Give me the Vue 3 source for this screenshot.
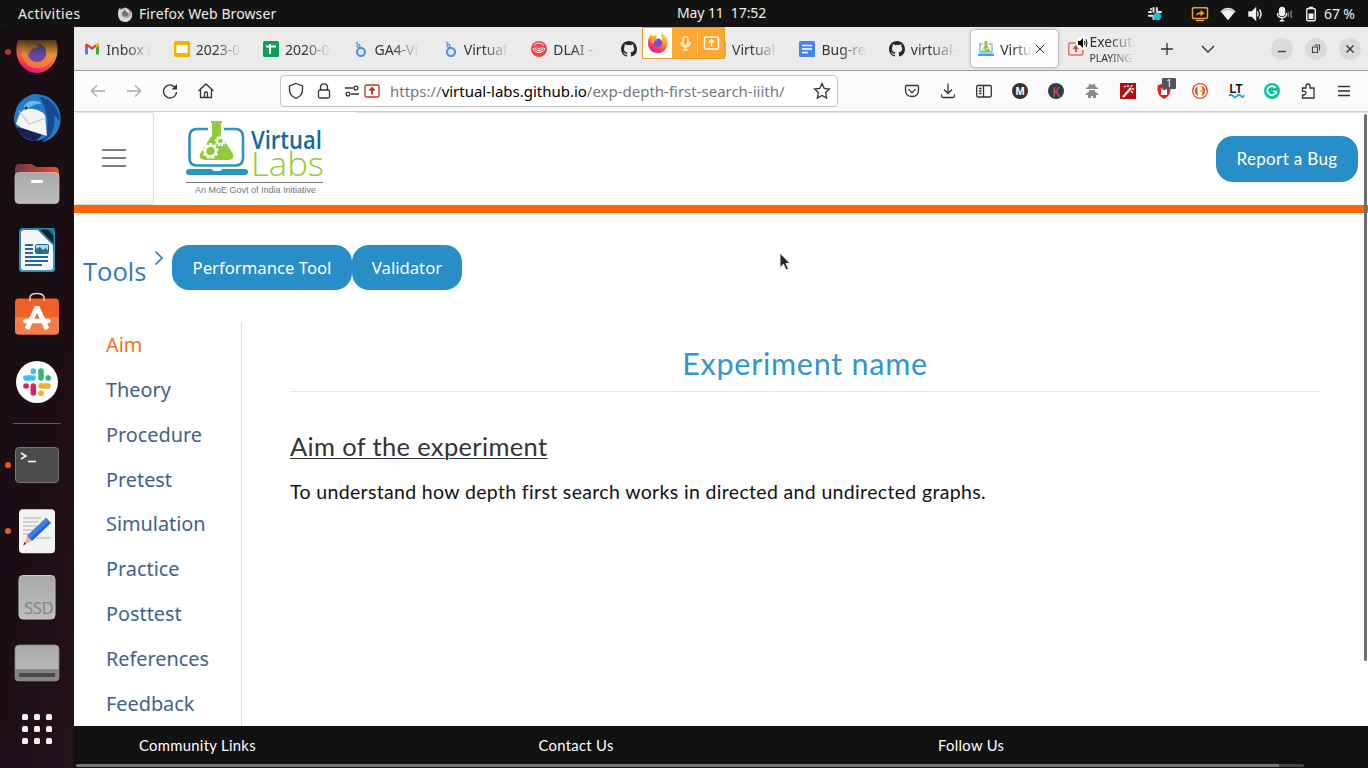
<script setup>
const tabs = [
  { icon: 'gmail', label: 'Inbox (5)' },
  { icon: 'slides', label: '2023-05' },
  { icon: 'sheets', label: '2020-05' },
  { icon: 'looker', label: 'GA4-Vir' },
  { icon: 'looker', label: 'Virtual L' },
  { icon: 'dlai', label: 'DLAI - Le' },
  { icon: 'github', label: 'virtual' },
  { icon: 'slides', label: 'Virtual L' },
  { icon: 'docs', label: 'Bug-rep' },
  { icon: 'github', label: 'virtual-l' },
  { icon: 'vlabs', label: 'Virtual', active: true },
  { icon: 'share', label: 'Executi', sub: 'PLAYING' },
]
const nav = ['Aim', 'Theory', 'Procedure', 'Pretest', 'Simulation', 'Practice', 'Posttest', 'References', 'Feedback']
const gridDots = [0, 1, 2, 3, 4, 5, 6, 7, 8]
const teeth = [0, 40, 80, 120, 160, 200, 240, 280, 320]
</script>

<template>
  <div class="screen">
    <header class="topbar">
      <span class="activities">Activities</span>
      <svg class="app-icon" width="16" height="16" viewBox="0 0 16 16">
        <circle cx="8" cy="8.5" r="6.8" fill="#a9a9a9" />
        <path d="M1 7C1 4 2 3 3 2L4 4C5 3 6 3 7 4L6 6L4 7C4 10 6 12 9 12C13 12 15 9 14 4C17 10 14 16 8 16C3 16 1 12 1 7Z" fill="#d8d8d8" />
        <circle cx="8.4" cy="7.6" r="3" fill="#737373" />
        <path d="M7 1C10 3 12 4 12 8L9 5Z" fill="#e5e5e5" />
      </svg>
      <span class="app-name">Firefox Web Browser</span>
      <span class="clock">May 11&nbsp; 17:52</span>
      <div class="tray">
        <svg width="18" height="18" viewBox="0 0 18 18">
          <g stroke="#e8e8e8" stroke-width="2" stroke-linecap="round">
            <path d="M7.500 3V7M3 7H5M10.800 3V6M3 10.700H7M7.500 11V14M11 7H15M5 4V4.200" />
          </g>
          <circle cx="11.300" cy="11.300" r="3.900" fill="#12bfdf" />
        </svg>
        <svg class="tray-share" width="18" height="16" viewBox="0 0 18 16" fill="none" stroke="#f7a02c" stroke-width="1.5">
          <rect x="1.500" y="1.800" width="15" height="10.700" rx="1.200" />
          <path d="M5 14.500H13" />
          <path d="M5 10C5 7.700 7 6.200 9.500 6.200V4L13.500 7.200L9.500 10.300V8.300C7.500 8.200 6 8.700 5 10Z" fill="#f7a02c" stroke="none" />
        </svg>
        <svg width="18" height="16" viewBox="0 0 18 16"><path d="M1.500 5.200Q9 -1.500 16.500 5.200L9 14.300Z" fill="#f2f2f2" /><path d="M2.700 5.900Q9 1 15.300 5.900" stroke="#a6a6a6" fill="none" /></svg>
        <svg width="18" height="16" viewBox="0 0 18 16" fill="none" stroke="#f2f2f2" stroke-width="1.400"><path d="M2 6H5L8.500 2.500V13.500L5 10H2Z" fill="#f2f2f2" /><path d="M10.500 5.500Q12 8 10.500 10.500M12.500 3.500Q15.500 8 12.500 12.500" /></svg>
        <svg width="18" height="16" viewBox="0 0 18 16" fill="none" stroke="#f2f2f2" stroke-width="1.400"><rect x="4.500" y="1.500" width="5" height="8" rx="2.500" fill="#f2f2f2" /><path d="M2.500 7V8Q2.800 11.500 7 11.800Q11.200 11.500 11.500 8V7M7 12V15M4.800 14.800H9.200" /><path d="M13.500 6Q12.700 8 13.500 11M16.500 4.500Q15 8 16.500 12" stroke="#858585" /></svg>
        <svg class="battery" width="12" height="16" viewBox="0 0 12 16"><rect x="1.700" y="2.500" width="8.600" height="12.200" rx="1.500" fill="none" stroke="#f2f2f2" stroke-width="1.400" /><path d="M4 .8H8V2H4ZM3.500 7.500H8.500V13H3.500Z" fill="#f2f2f2" /></svg>
        <span class="percent">67 %</span>
      </div>
    </header>

    <div class="desktop">
      <aside class="dock">
        <div class="slot first running dim">
          <svg viewBox="0 0 50 50">
            <defs>
              <linearGradient id="fx" x1="0.800" y1="0" x2="0.400" y2="1"><stop offset="0" stop-color="#b0942c" /><stop offset=".35" stop-color="#dc9a36" /><stop offset=".7" stop-color="#fa4d46" /><stop offset="1" stop-color="#e70a83" /></linearGradient>
              <linearGradient id="fade" x1="0" y1="0" x2="0" y2="1"><stop offset="0" stop-color="#1a0f16" stop-opacity=".75" /><stop offset="1" stop-color="#1a0f16" stop-opacity="0" /></linearGradient>
            </defs>
            <path d="M6 13H44C50 31 38 46 25 46C11 46 0 31 6 13Z" fill="url(#fx)" />
            <path d="M11 13L22 15L16 19L27 21L20 27L15 23C14 32 22 38 31 34C38 30 37 20 33 14H43C46 31 37 41 25 41C13 41 6 29 11 13Z" fill="#ed9132" opacity=".7" />
            <circle cx="25" cy="25.500" r="9.300" fill="#6547a5" />
            <path d="M12 13H28L24 17L27 20L20 22L16 28Z" fill="#bd8b31" />
            <rect x="3" y="12" width="44" height="16" fill="url(#fade)" />
          </svg>
        </div>
        <div class="slot">
          <svg viewBox="0 0 50 50">
            <path d="M3 20C5 8 15 3 21 1C30 1 37 3 42 9C50 17 50 29 46 37C43 43 37 48 30 49L33 45C22 51 11 47 6 37C2 31 1 25 3 20Z" fill="#247bc5" />
            <path d="M27 4C38 4 48 16 48 28L42 22C44 35 39 45 30 49C38 38 38 20 27 4Z" fill="#174b8d" />
            <path d="M7 22L11 17C19 14 29 17 33 22L35 43L10 35L4 31Z" fill="#f5f4f5" />
            <path d="M7 18L17 31L34 25" fill="none" stroke="#c5c6cc" stroke-width="1.200" />
            <path d="M4 34L12 36L30 42L24 48C14 47 7 41 4 34Z" fill="#192250" />
            <path d="M12 13C17 6 26 7 30 11C23 10 20 14 12 17Z" fill="#64bdeb" />
            <circle cx="14" cy="15" r="1.500" fill="#253044" />
          </svg>
        </div>
        <div class="slot">
          <svg viewBox="0 0 50 50">
            <defs><linearGradient id="fold" x1="0"><stop offset="0" stop-color="#743347" /><stop offset="1" stop-color="#e2512b" /></linearGradient><linearGradient id="silver" x1="0" y1="0" x2="0" y2="1"><stop offset="0" stop-color="#a9a9a9" /><stop offset="1" stop-color="#bdbdbd" /></linearGradient></defs>
            <path d="M3 10Q3 5 7 5H20L24 8H43Q47 8 47 13V35H3Z" fill="url(#fold)" />
            <rect x="3" y="13.500" width="44" height="31" rx="4" fill="url(#silver)" stroke="#c9c9c9" stroke-width=".7" />
            <rect x="19" y="21" width="12" height="3" rx="1" fill="#fff" />
          </svg>
        </div>
        <div class="slot">
          <svg viewBox="0 0 50 50">
            <rect x="7" y="3" width="36" height="44" rx="4" fill="#2b789d" />
            <path d="M7 25H43V43Q43 47 39 47H11Q7 47 7 43Z" fill="#57abd3" />
            <path d="M12 5H26L41 20V42Q41 45 38 45H12Q9 45 9 42V8Q9 5 12 5Z" fill="#f4f6f7" />
            <path d="M26 3L43 20V3Z" fill="#14222e" /><path d="M34 3H41Q43 3 43 5V12Z" fill="#236c92" />
            <path d="M25 3L43 21" stroke="#2b789d" stroke-width="1.500" />
            <path d="M13 20H21M13 24H21M13 28H21M13 32H36M13 36H36M13 40H30" stroke="#236c94" stroke-width="2" />
            <rect x="23.500" y="19.500" width="13" height="9" rx="1" fill="#a8d7ec" stroke="#24698b" /><path d="M24 28V24L28 22L31 25L34 23L36 26V28Z" fill="#246b90" />
            <rect x="7.700" y="3.700" width="34.600" height="42.600" rx="4" fill="none" stroke="#3489b4" stroke-width="1.400" />
          </svg>
        </div>
        <div class="slot">
          <svg viewBox="0 0 50 50">
            <rect x="3" y="7.500" width="44" height="36" rx="4" fill="#ef6128" /><path d="M3 26H47V40Q47 43.500 43 43.500H7Q3 43.500 3 40Z" fill="#f17d4b" />
            <path d="M18 10V7Q18 2.500 25 2.500Q32 2.500 32 7V10" fill="none" stroke="#e8c99a" stroke-width="1.700" />
            <path d="M15 38L25 16L35 38" fill="none" stroke="#fff" stroke-width="5" stroke-linejoin="bevel" /><path d="M13.500 30H36.500" stroke="#fff" stroke-width="4.600" stroke-linecap="round" />
          </svg>
        </div>
        <div class="slot">
          <svg viewBox="0 0 50 50">
            <circle cx="25" cy="25" r="21" fill="#fff" />
            <g stroke-linecap="round" stroke-width="5.500">
              <path d="M14 21H21" stroke="#36c5f0" /><path d="M21.300 14V14.500" stroke="#36c5f0" />
              <path d="M29 14V21" stroke="#2eb67d" /><path d="M36 21H36.200" stroke="#2eb67d" />
              <path d="M29 29H36" stroke="#ecb22e" /><path d="M29 36V36.200" stroke="#ecb22e" />
              <path d="M21.300 29V36" stroke="#e01e5a" /><path d="M14 29H14.200" stroke="#e01e5a" />
            </g>
          </svg>
        </div>
        <div class="separator"></div>
        <div class="slot running">
          <svg viewBox="0 0 50 50"><rect x="3.500" y="7.500" width="43" height="35" rx="3.500" fill="#4b4b4b" stroke="#777" /><path d="M9 13L14 16L9 19M16 21.500H24" fill="none" stroke="#fff" stroke-width="1.500" /></svg>
        </div>
        <div class="slot running">
          <svg viewBox="0 0 50 50"><rect x="7" y="3.300" width="36" height="44" rx="4" fill="#f3f3f2" /><path d="M11 12H29M11 16H26M11 20H25M11 24H22M11 28H20M24 32H39" stroke="#c5c2b8" stroke-width="1.700" /><path d="M34 12L39 17L20 35L15 30Z" fill="#2862cf" /><path d="M34 12L37 15L18 33L15 30Z" fill="#3f7eed" /><path d="M15 30L20 35L11.500 39Z" fill="#eab88b" /><path d="M12.500 36L14 38L11.200 39.500Z" fill="#333" /></svg>
        </div>
        <div class="slot">
          <svg viewBox="0 0 50 50"><rect x="7" y="3.500" width="36" height="43.500" rx="4" fill="url(#silver)" stroke="#cacaca" /><text x="12" y="42" class="ssd" textLength="30">SSD</text></svg>
        </div>
        <div class="slot">
          <svg viewBox="0 0 50 50"><rect x="3" y="7" width="44" height="36" rx="4" fill="url(#silver)" stroke="#898989" stroke-width=".7" /><path d="M3 31H47V39Q47 43 43 43H7Q3 43 3 39Z" fill="#858585" /><rect x="7" y="35" width="36" height="4" fill="#4a4a4a" /></svg>
        </div>
        <div class="slot">
          <div class="apps"><i v-for="d in gridDots" :key="d"></i></div>
        </div>
      </aside>

      <main class="window">
        <div class="tabbar">
          <div v-for="(tab, i) in tabs" :key="i" class="tab" :class="{ active: tab.active }">
            <svg class="favicon" width="16" height="16" viewBox="0 0 16 16">
              <g v-if="tab.icon === 'gmail'"><path d="M1 4V13H4V6L8 9L12 6V13H15V4Q14 1.500 12 3L8 6L4 3Q2 1.500 1 4Z" fill="#e94335" /><path d="M1 5L4 7V13.500H2Q1 13.500 1 12Z" fill="#4285f4" /><path d="M12 7L15 5V12Q15 13.500 14 13.500H12Z" fill="#34a853" /><path d="M12 3Q15 2 15 5L12 7Z" fill="#fbbc04" /></g>
              <g v-else-if="tab.icon === 'slides'"><rect width="16" height="16" rx="1.500" fill="#f4b400" /><rect x="2.500" y="4" width="11" height="8" fill="#fff" /></g>
              <g v-else-if="tab.icon === 'sheets'"><rect width="16" height="16" rx="1.500" fill="#0f9d58" /><path d="M3 5.500H13M7 3V13" stroke="#fff" stroke-width="2" /></g>
              <g v-else-if="tab.icon === 'looker'" fill="none" stroke="#4c8df2"><circle cx="9" cy="11" r="4" stroke-width="2.200" /><circle cx="6.500" cy="4.800" r="1.500" stroke-width="1.200" /><circle cx="5" cy="1.800" r=".7" /></g>
              <g v-else-if="tab.icon === 'dlai'" fill="none" stroke="#fff"><circle cx="8" cy="8" r="8" fill="#e8484d" stroke="none" /><path d="M2 7C3 13 13 13 14 7M4 6.500C5 11 11 11 12 6.500M6 6.500Q8 10 10 6.500" stroke-width="1" /><path d="M3 4.500Q8 -.5 13 4.500" stroke-width=".8" /></g>
              <path v-else-if="tab.icon === 'github'" fill="#24292e" fill-rule="evenodd" d="M8 0C3.580 0 0 3.580 0 8c0 3.540 2.290 6.530 5.470 7.590.4.070.55-.17.55-.38v-1.340C3.800 14.350 3.330 12.800 3.330 12.800c-.36-.92-.89-1.170-.89-1.170-.73-.5.05-.49.050-.49.8.06 1.230.82 1.230.82.71 1.220 1.870.87 2.330.66.070-.52.28-.87.51-1.070-1.780-.2-3.640-.89-3.640-3.950 0-.87.31-1.590.82-2.150-.08-.2-.36-1.020.08-2.120 0 0 .67-.21 2.200.82.64-.18 1.320-.27 2-.27s1.360.09 2 .27c1.530-1.040 2.200-.82 2.200-.82.44 1.100.16 1.920.08 2.120.51.56.82 1.270.82 2.150 0 3.070-1.870 3.750-3.650 3.950.29.25.54.73.54 1.480v2.190c0 .21.15.46.55.38A8.010 8.010 0 0 0 16 8c0-4.420-3.580-8-8-8Z" />
              <g v-else-if="tab.icon === 'docs'"><rect width="16" height="16" rx="1.500" fill="#4285f4" /><path d="M3 4.500H13M3 8H13M3 11.500H9" stroke="#fff" stroke-width="1.600" /></g>
              <g v-else-if="tab.icon === 'vlabs'"><path d="M5 3H2V12H14V3H11" fill="none" stroke="#7dbce0" stroke-width="1.400" /><path d="M0 14H16" stroke="#48a0d1" stroke-width="2" /><path d="M6.500 0H9.500V5L13 11H3L6.500 5Z" fill="#93c83d" /><circle cx="6" cy="9" r="1" fill="#fff" /><circle cx="9" cy="7.500" r=".8" fill="#fff" /></g>
              <g v-else><rect x=".8" y="2" width="14" height="12" rx="1.500" fill="none" stroke="#e36c61" stroke-width="1.500" /><path d="M8 11V5M5.500 8L8 5L10.500 8" stroke="#d74437" stroke-width="1.800" fill="none" /></g>
            </svg>
            <span v-if="tab.sub" class="sound"><svg width="10" height="10" viewBox="0 0 10 10"><path d="M0 3H2L5 0V10L2 7H0Z" fill="#000" /><path d="M6.500 3Q7.500 5 6.500 7M8 1Q10 5 8 9" fill="none" stroke="#000" /></svg></span>
            <span class="tab-text" :class="{ double: tab.sub }">
              <span>{{ tab.label }}</span><small v-if="tab.sub">{{ tab.sub }}</small>
            </span>
            <svg v-if="tab.active" class="close" width="10" height="10" viewBox="0 0 10 10"><path d="M1 1L9 9M9 1L1 9" stroke="#333" stroke-width="1" /></svg>
          </div>
          <div class="tab-tools">
            <svg width="12" height="12" viewBox="0 0 12 12"><path d="M6 0V12M0 6H12" stroke="#333" stroke-width="1.300" /></svg>
            <svg width="14" height="8" viewBox="0 0 14 8"><path d="M1 1L7 7L13 1" stroke="#333" stroke-width="1.400" fill="none" /></svg>
          </div>
          <div class="controls">
            <span><svg width="10" height="10" viewBox="0 0 10 10"><path d="M1 7.500H9" stroke="#333" stroke-width="1.300" /></svg></span>
            <span><svg width="10" height="10" viewBox="0 0 10 10"><path d="M1.500 3H6.500V8.500H1.500ZM3.500 1H8.500V6.500" fill="none" stroke="#444" stroke-width="1.100" /></svg></span>
            <span><svg width="10" height="10" viewBox="0 0 10 10"><path d="M1.500 1.500L8.500 8.500M8.500 1.500L1.500 8.500" stroke="#333" stroke-width="1.400" /></svg></span>
          </div>
          <div class="sharing">
            <span class="sharing-fox"><svg width="22" height="22" viewBox="0 0 22 22"><defs><linearGradient id="fx2" x1=".8" y1="0" x2=".3" y2="1"><stop offset="0" stop-color="#ffe743" /><stop offset=".4" stop-color="#ff9b2e" /><stop offset=".75" stop-color="#f83c55" /><stop offset="1" stop-color="#d41d9a" /></linearGradient></defs><path d="M1 11C1 7 2 5 4 2L5 5L9 3L8 6L11 8L6 9C7 15 14 15 15 10C16 6 13 4 14 0C17 2 17 4 19 5C22 10 21 21 11 21C5 21 1 17 1 11Z" fill="url(#fx2)" /><circle cx="11" cy="10.800" r="4.300" fill="#7050d6" /><path d="M3 4L10 4L8 7L11 8L7 9L5 12Z" fill="#ffa62d" /></svg></span>
            <svg width="24" height="22" viewBox="0 0 24 22" fill="none" stroke="#fff" stroke-width="1.200"><rect x="10" y="4.500" width="5" height="9" rx="2.500" /><path d="M8 10V11Q8.500 15 12.500 15Q16.500 15 17 11V10M12.500 15V18M9.500 18H15.500" /></svg>
            <span class="sharing-screen"><svg width="18" height="18" viewBox="0 0 18 18" fill="none" stroke="#fff" stroke-width="1.400"><rect x="1.500" y="3" width="14" height="12" rx="1.500" /><path d="M8.500 12.500V6M6 8.500L8.500 6L11 8.500" /></svg></span>
          </div>
        </div>

        <div class="toolbar">
          <div class="navs">
            <svg class="muted" viewBox="0 0 18 18"><path d="M16 9H2M8 3.500L2.300 9L8 14.500" /></svg>
            <svg class="muted" viewBox="0 0 18 18"><path d="M2 9H16M10 3.500L15.700 9L10 14.500" /></svg>
            <svg viewBox="0 0 18 18"><path d="M14.800 6.500A6.500 6.500 0 1 0 15.500 10" /><path d="M16 2V7.500H10.500Z" fill="#333" stroke="none" /></svg>
            <svg viewBox="0 0 18 18"><path d="M1.500 9L9 2L16.500 9M3.500 7.500V15.500H14.500V7.500M7.500 15V11.500Q7.500 10 9 10Q10.500 10 10.500 11.500V15" /></svg>
          </div>
          <div class="urlbar">
            <svg class="u1" viewBox="0 0 18 18"><path d="M9 1.500L15.500 4V8Q15.500 13.500 9 16.500Q2.500 13.500 2.500 8V4Z" /></svg>
            <svg class="u2" viewBox="0 0 18 18"><rect x="3.500" y="8" width="11" height="8" rx="1.500" /><path d="M5.500 8V5Q5.500 1.800 9 1.800Q12.500 1.800 12.500 5V8" /></svg>
            <svg class="u3" viewBox="0 0 18 18"><path d="M2 6H10M8 12H16" /><circle cx="13" cy="6" r="1.900" /><circle cx="5" cy="12" r="1.900" /></svg>
            <svg class="u4 red" viewBox="0 0 18 18"><rect x="2" y="3" width="14" height="12" rx="1.500" /><path d="M9 12.500V6M6.500 8.500L9 6L11.500 8.500" stroke-width="1.800" /></svg>
            <span class="url">https://<b>virtual-labs.github.io</b>/exp-depth-first-search-iiith/</span>
            <svg class="star" viewBox="0 0 18 18"><path d="M9 1.500L11.200 6.300L16.500 7L12.600 10.600L13.600 16L9 13.400L4.400 16L5.400 10.600L1.500 7L6.800 6.300Z" /></svg>
          </div>
          <div class="exts">
            <svg viewBox="0 0 18 18"><path d="M3.500 3.500H14.500Q15.500 3.500 15.500 4.500V8Q15.500 14.500 9 14.500Q2.500 14.500 2.500 8V4.500Q2.500 3.500 3.500 3.500ZM5.500 7.300L9 10.600L12.500 7.300" /></svg>
            <svg viewBox="0 0 18 18"><path d="M9 1.500V11M5 7.500L9 11.500L13 7.500M2.500 12.500V14Q2.500 15.500 4 15.500H14Q15.500 15.500 15.500 14V12.500" /></svg>
            <svg viewBox="0 0 18 18"><rect x="1.700" y="3.500" width="14.600" height="11.500" rx="1.500" /><path d="M8.500 3.500V15M4 6.500H6.500M4 9H6.500M4 11.500H6.500" /></svg>
            <svg viewBox="0 0 18 18"><circle cx="9" cy="9" r="8" fill="#343434" stroke="none" /><text x="9" y="13" text-anchor="middle" class="m">M</text></svg>
            <svg viewBox="0 0 18 18"><circle cx="9" cy="9" r="8" fill="#293f50" stroke="none" /><text x="5.500" y="14.500" textLength="7.500" lengthAdjust="spacingAndGlyphs" class="k">K</text></svg>
            <svg viewBox="0 0 18 18"><g fill="#8c8c8c" stroke="none"><path d="M5 5L6.500 1.500L9 3L11.500 1.500L13 5L15 6V7H3V6Z" /><path d="M6 8H12V10L15 11.500V13H13V16H10V14H8V16H5V13H3V11.500L6 10Z" /></g></svg>
            <svg viewBox="0 0 18 18"><rect x="1" y="1" width="16" height="16" fill="#b60e14" stroke="none" /><path d="M4 15L12 6" stroke="#fff" stroke-width="2.200" /><path d="M5 5L7 4M9 3V5M13 3L12 5M15 7H13M14 11L12 9" stroke="#fff" /></svg>
            <span class="ublock"><svg viewBox="0 0 18 18"><path d="M9 1L15.500 3.500V8Q15 14 9 17Q3 14 2.500 8V3.500Z" fill="#e01e24" stroke="none" /><rect x="6" y="8" width="6" height="5" fill="#fff" stroke="none" /><path d="M7 8V6.500Q9 4 11 6.500V8" stroke="#fff" /></svg><em>1</em></span>
            <svg viewBox="0 0 18 18"><circle cx="9" cy="9" r="8" fill="#e35335" stroke="none" /><circle cx="9" cy="9" r="6" fill="#e35335" stroke="#fff" /><path d="M7 15L6.500 7Q6 3.500 9 4Q12 4.500 11 9L11.500 15Z" fill="#fff" stroke="none" /><path d="M9 8Q12 7.500 13.500 9L9.500 10.500Z" fill="#fac43c" stroke="none" /><path d="M10 12H13L12 14Z" fill="#58ad51" stroke="none" /></svg>
            <svg viewBox="0 0 18 18"><text x="2.500" y="11" textLength="13" lengthAdjust="spacingAndGlyphs" class="lt">LT</text><path d="M2 14Q4 11.500 6 14T10 14T14 14T17 13" stroke="#229ad6" stroke-width="1.800" /></svg>
            <svg viewBox="0 0 18 18"><circle cx="9" cy="9" r="8" fill="#15c39a" stroke="none" /><path d="M12.500 6A4.500 4.500 0 1 0 13.300 9.500H10M13.300 9.500V12" stroke="#fff" stroke-width="1.500" /></svg>
            <svg viewBox="0 0 18 18"><path d="M3.500 6H7V4Q7 2 9 2Q11 2 11 4V6H15V16H3.500V13H5Q7 12.500 7 10.800Q7 9.300 5 9.300H3.500Z" /></svg>
            <svg viewBox="0 0 18 18"><path d="M3 4.500H15M3 9H15M3 13.500H15" /></svg>
          </div>
        </div>

        <section class="page">
          <header class="site-header">
            <button class="burger"><i></i><i></i><i></i></button>
            <svg class="logo" width="138" height="78" viewBox="0 0 138 78">
              <path d="M22 9H11Q3.500 9 3.500 17V38Q3.500 45.500 11 45.500H49Q57 45.500 57 38V17Q57 9 49 9H38" fill="none" stroke="#2c92c8" stroke-width="2.600" />
              <path d="M3 49H26Q26 51 28 51H34Q36 51 36 49H59Q62 49 62 52Q62 55 59 55H3Q0 55 0 52Q0 49 3 49Z" fill="#2c92c8" />
              <path d="M25 1H36V3H35V15L47 34Q49 39 43 40H19Q12 39 14 34L26 15V3H25Z" fill="#94c83d" />
              <g fill="#fff"><path v-for="a in teeth" :key="a" d="M23 23H26V27H23Z" :transform="`rotate(${a} 24.5 31)`" /><circle cx="24.500" cy="31" r="6.500" /><path v-for="a in teeth" :key="a + 500" d="M33.500 15.500H35.500V19H33.500Z" :transform="`rotate(${a} 34.5 21)`" /><circle cx="34.500" cy="21" r="4" /></g>
              <circle cx="24.500" cy="31" r="4.300" fill="#94c83d" /><circle cx="34.500" cy="21" r="2.300" fill="#94c83d" />
              <text x="65" y="28.500" class="logo-virtual" textLength="71" lengthAdjust="spacingAndGlyphs">Virtual</text>
              <text x="65" y="55.500" class="logo-labs" textLength="73" lengthAdjust="spacingAndGlyphs">Labs</text>
              <path d="M0 62.500H137" stroke="#777" />
              <text x="9" y="73" class="logo-tag" textLength="121" lengthAdjust="spacingAndGlyphs">An MoE Govt of India Initiative</text>
            </svg>
            <button class="pill report">Report a Bug</button>
          </header>
          <div class="tools">
            <span class="tools-title">Tools</span>
            <svg class="tools-chevron" width="10" height="16" viewBox="0 0 10 16"><path d="M1.500 1.500L8 8L1.500 14.500" fill="none" stroke="#337ab7" stroke-width="1.700" /></svg>
            <button class="pill perf">Performance Tool</button>
            <button class="pill valid">Validator</button>
          </div>
          <div class="columns">
            <nav class="side"><a v-for="n in nav" :key="n" :class="{ on: n === 'Aim' }">{{ n }}</a></nav>
            <article>
              <h1>Experiment name</h1>
              <h2>Aim of the experiment</h2>
              <p>To understand how depth first search works in directed and undirected graphs.</p>
            </article>
          </div>
          <footer><span>Community Links</span><span>Contact Us</span><span>Follow Us</span></footer>
          <div class="vscroll"></div>
          <div class="hscroll"></div>
        </section>
      </main>
    </div>
    <svg class="pointer" width="14" height="20" viewBox="0 0 14 20"><path d="M2 1V15.500L5.500 12.300L8 18L10.500 17L8 11.500H12Z" fill="#292929" stroke="#eee" stroke-width="1" /></svg>
  </div>
</template>

<style>
body { overflow: hidden; }
</style>

<style scoped>
* { box-sizing: border-box; }
.screen { width: 1368px; height: 768px; position: relative; overflow: hidden; font-family: "Noto Sans", "Open Sans", sans-serif; background: #fff; }
svg { display: block; flex: none; }
button { border: 0; padding: 0; font: inherit; }
.topbar { height: 27px; background: #131313; color: #eee; display: flex; align-items: center; position: relative; font-size: 14px; padding: 0 12px 0 18px; white-space: nowrap; }
.activities { width: 99px; letter-spacing: .42px; }
.app-name { margin-left: 6px; letter-spacing: .1px; }
.clock { position: absolute; left: 677px; top: 0; line-height: 26px; letter-spacing: -.1px; }
.tray { margin-left: auto; display: flex; align-items: center; gap: 10px; }
.tray-share { margin-left: 17px; }
.battery { margin-left: 2px; }
.percent { width: 32px; margin-left: -3px; letter-spacing: -.1px; }
.desktop { display: flex; height: 741px; }
.dock { width: 74px; flex: none; overflow: hidden; background: linear-gradient(100deg, #160d12, #1d0e16 60%, #26121c); }
.slot { height: 66px; display: flex; align-items: center; justify-content: center; position: relative; }
.slot svg { width: 50px; height: 50px; }
.first { margin-top: -8px; }
.running::before { content: ""; position: absolute; left: 5px; top: 30px; width: 6px; height: 6px; border-radius: 50%; background: #e95420; }
.dim::before { opacity: .7; }
.separator { height: 17px; padding-top: 8px; }
.separator::before { content: ""; display: block; width: 48px; height: 1px; background: #5e575c; margin-left: 13px; }
.ssd { font: 17px "Noto Sans", sans-serif; fill: #858585; }
.apps { display: grid; grid-template-columns: repeat(3, 6px); gap: 6px; }
.apps i { height: 6px; border-radius: 1.5px; background: #f2f2f2; }
.window { width: 1294px; }
.tabbar { height: 44px; background: #ebebeb; border-bottom: 1px solid #999; display: flex; align-items: center; padding-left: 2px; position: relative; }
.tab { width: 87.400px; height: 37px; margin: 0 1px; padding-left: 7.300px; display: flex; align-items: center; position: relative; flex: none; }
.tab.active { background: #fcfcfc; border-radius: 4px; box-shadow: 0 0 3px rgba(0,0,0,.5); }
.tab-text { margin-left: 6px; width: 47px; overflow: hidden; white-space: nowrap; font-size: 14px; line-height: 20px; padding-top: 2px; color: #333; mask-image: linear-gradient(90deg, #000 40%, transparent 98%); }
.active .tab-text { width: 34px; }
.close { margin-left: 1px; }
.double { font-size: 13.800px; line-height: 16px; display: flex; flex-direction: column; padding-top: 1px; }
.double small { font-size: 10.500px; line-height: 14px; letter-spacing: -.1px; padding-top: 1px; }
.sound { position: absolute; left: 16px; top: 6px; width: 14px; height: 14px; border-radius: 50%; background: #fff; padding: 2px; }
.tab-tools { margin-left: 12px; display: flex; align-items: center; gap: 28px; }
.controls { margin-left: auto; margin-right: 7px; display: flex; gap: 12px; }
.controls span { width: 22px; height: 22px; border-radius: 50%; background: #dadada; display: grid; place-items: center; }
.sharing { position: absolute; left: 568px; top: 0; width: 83px; height: 32px; border: 1px solid #e89c29; background: #fca833; display: flex; align-items: center; }
.sharing-fox { width: 29px; height: 30px; background: #fff; display: grid; place-items: center; }
.sharing > svg { margin-left: 1px; }
.sharing-screen { border-left: 1px solid #fdd090; padding: 2px 0 2px 5px; }
.toolbar { height: 41px; background: #fbfbfb; border-bottom: 1px solid #ccc; display: flex; align-items: center; }
.toolbar svg { width: 18px; height: 18px; fill: none; stroke: #333; stroke-width: 1.300; }
.navs { display: flex; gap: 18px; margin-left: 15px; width: 191px; }
.navs .muted { stroke: #aaa; }
.urlbar { width: 558px; height: 32px; border: 1px solid #c4c4c4; border-radius: 4px; background: #fff; display: flex; align-items: center; padding: 0 6px; }
.u2 { margin-left: 10px; }
.u3 { margin-left: 10px; }
.u4 { margin-left: 2px; }
.urlbar .red { stroke: #cb2c20; }
.url { margin-left: 9px; font-size: 15px; color: #777; white-space: nowrap; letter-spacing: -.01px; }
.url b { font-weight: 400; color: #000; }
.star { margin-left: auto; }
.exts { display: flex; gap: 18px; margin-left: 65px; }
.toolbar text { stroke: none; font-family: "Liberation Sans", sans-serif; font-weight: 700; }
.m { font-size: 11px; fill: #fff; }
.k { font-size: 15px; fill: #cf4441; }
.lt { font-size: 13px; fill: #111; }
.ublock { position: relative; }
.ublock em { position: absolute; left: 7px; top: -4px; width: 14px; height: 11px; border-radius: 1px; background: #555; color: #fff; font: normal 10px/11px "Noto Sans", sans-serif; text-align: center; }
.page { height: 656px; position: relative; display: flex; flex-direction: column; background: #fff; }
.site-header { height: 101px; flex: none; border-bottom: 8px solid #f60; display: flex; align-items: center; position: relative; background: linear-gradient(#dfe2e2, #dfe2e2) 282px 0 / 1012px 1px no-repeat; }
.burger { width: 80px; height: 93px; padding-bottom: 2px; border: 1px solid #ddd; border-left: 0; border-radius: 4px; background: #fff; display: flex; flex-direction: column; align-items: center; justify-content: center; gap: 6px; }
.burger i { width: 24px; height: 2px; background: #7d7d7d; }
.logo { margin-left: 32px; }
.logo-virtual { font: 600 25.500px "Open Sans", sans-serif; fill: #14689b; }
.logo-labs { font: 300 33px "Open Sans", sans-serif; fill: #94c83d; }
.logo-tag { font: 9px "Liberation Sans", sans-serif; fill: #777; }
.pill { height: 45px; border-radius: 17px; background: #288ec8; color: #fff; text-align: center; white-space: nowrap; font-family: "Noto Sans", sans-serif; font-size: 16.700px; }
.report { margin-left: auto; margin-right: 10px; width: 142px; height: 46px; font-family: Lato, sans-serif; font-size: 17px; letter-spacing: .36px; }
.tools { height: 109px; flex: none; padding: 32px 0 0 9px; display: flex; align-items: flex-start; color: #337ab7; }
.tools-title { width: 71px; font: 25.500px/34px "Open Sans", sans-serif; padding-top: 9px; }
.tools-chevron { margin-top: 5px; margin-right: 8px; }
.perf { width: 180px; }
.valid { width: 110px; }
.columns { flex: 1; display: flex; min-height: 0; }
.side { width: 168px; border-right: 1px solid #dee2e6; padding-left: 32px; display: flex; flex-direction: column; }
.side a { height: 44.850px; line-height: 45px; font-size: 19.850px; color: #3e6389; flex: none; }
.side .on { color: #f37021; }
article { width: 1030px; margin-left: 48px; font-family: Lato, sans-serif; }
h1 { margin: 0; height: 70px; border-bottom: 1px solid #e5e5e5; text-align: center; font-weight: 400; font-size: 30.500px; letter-spacing: .74px; line-height: 82px; color: #3097ce; }
h2 { margin: 35px 0 0; font-size: 25.500px; font-weight: 400; letter-spacing: .35px; line-height: 38px; color: #333; text-decoration: underline; text-decoration-thickness: 1px; text-underline-offset: 2px; }
p { margin: 12px 0 0; font-size: 19.500px; letter-spacing: .34px; line-height: 30px; color: #111; }
footer { height: 42px; flex: none; background: #111; color: #fff; display: flex; padding-left: 65px; font: 14.800px/39px Lato, sans-serif; letter-spacing: .31px; }
footer span { width: 399.500px; }
.vscroll { position: absolute; right: 1px; top: 2px; width: 3px; height: 547px; border-radius: 2px; background: #6e6e6e; }
.hscroll { position: absolute; left: 2px; bottom: 1px; width: 1228px; height: 3px; border-radius: 2px; background: linear-gradient(90deg, #777 98%, #444 98%); }
.pointer { position: absolute; left: 778px; top: 252px; }
</style>
